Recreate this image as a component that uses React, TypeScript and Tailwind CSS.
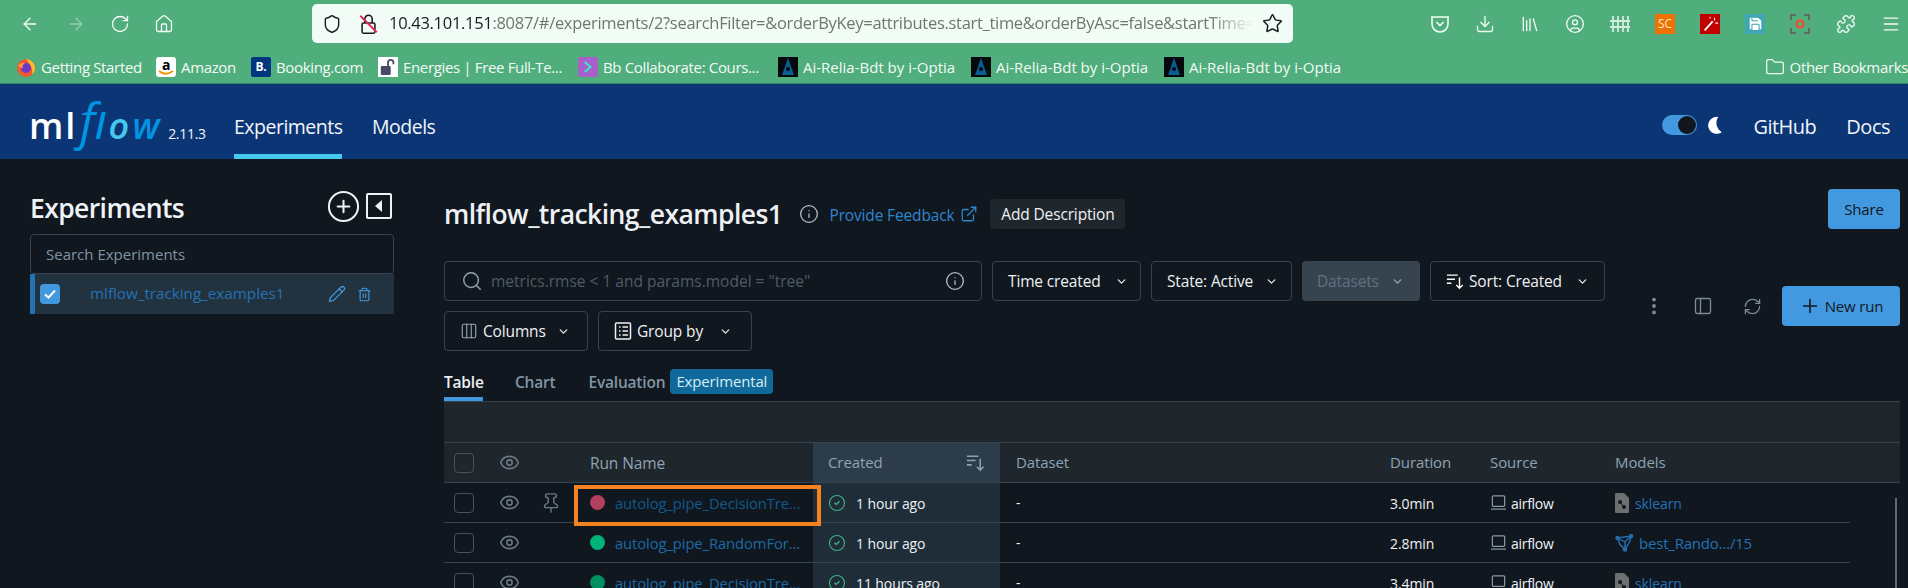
import React from 'react';
import {
  ArrowLeft, ArrowRight, RotateCw, Home, Shield, Star, Download, Library, CircleUser, Puzzle, Menu, Folder,
  Plus, CirclePlus, Pencil, Trash2, Info, ExternalLink, Search, ChevronDown, Columns3, MoreVertical,
  PanelLeft, RefreshCw, Eye, Pin, CircleCheck, Save,
} from 'lucide-react';

const ui = "font-['Open_Sans',sans-serif]";

const SortIcon = ({ className }: { className?: string }) => (
  <svg viewBox="0 0 20 20" className={className} fill="none" stroke="currentColor" strokeWidth="1.6">
    <path d="M1 3.500h12M1 8h9M1 12.500h5M15 6v12M11.500 14.500 15 18l3.500-3.500" />
  </svg>
);

const SlashLock = () => (
  <svg viewBox="0 0 20 24" className="w-[19px] h-[22px]" fill="none" strokeWidth="1.7">
    <rect x="3" y="11" width="14" height="11" rx="1.500" stroke="#1b1b1b" />
    <path d="M6 11V6.500a4 4 0 0 1 8 0V11" stroke="#1b1b1b" />
    <path d="M1 3l18 18" stroke="#e0245e" strokeWidth="2" />
  </svg>
);

const FirefoxIcon = () => (
  <svg viewBox="0 0 20 20" className="w-[20px] h-[20px]">
    <circle cx="10" cy="11" r="9" fill="#f2592b" />
    <path d="M10 2c6 1 9 5 9 9 0 3-1 5-3 6 1-5-1-9-6-15z" fill="#ffbd2e" />
    <circle cx="10" cy="11" r="5" fill="#6e39c5" />
    <path d="M2 9c2-3 5-4 7-3-2 1-3 3-2 5-2 0-4-1-5-2z" fill="#ff9640" />
  </svg>
);

const AiIcon = () => (
  <svg viewBox="0 0 20 20" className="w-[20px] h-[20px] bg-[#05080c] shrink-0">
    <path d="M10 1 16 18H4z" fill="#0a5d8f" />
    <circle cx="10" cy="12" r="2" fill="#05080c" />
  </svg>
);

const bookmarks = [
  { icon: <FirefoxIcon />, label: 'Getting Started', box: 'w-[140px]' },
  {
    icon: (
      <span className="relative w-[20px] h-[20px] rounded-[3px] bg-white flex justify-center text-[14px] font-bold leading-[15px] text-black">
        a
        <svg viewBox="0 0 16 6" className="absolute left-[2px] bottom-[1px] w-[16px] h-[6px]"><path d="M1 1c4 3.500 9 3.500 14 0" fill="none" stroke="#f79400" strokeWidth="1.800" /></svg>
      </span>
    ),
    label: 'Amazon', box: 'w-[95px]',
  },
  {
    icon: <span className="w-[20px] h-[20px] rounded-[2px] bg-[#003580] flex items-center justify-center text-[12px] font-bold leading-none text-white">B.</span>,
    label: 'Booking.com', box: 'w-[127px]',
  },
  {
    icon: <span className="w-[20px] h-[20px] bg-white flex items-center justify-center text-[#4a4a68]"><svg viewBox="0 0 20 20" className="w-[18px] h-[18px]"><rect x="2" y="9" width="11" height="10" rx="1.500" fill="currentColor" /><path d="M10 9V5a3 3 0 0 1 6 0v2" fill="none" stroke="currentColor" strokeWidth="2" /></svg></span>,
    label: 'Energies | Free Full-Te...', box: 'w-[200px]',
  },
  {
    icon: <span className="w-[20px] h-[20px] rounded-[2px] bg-[#a85fc9] flex items-center justify-center"><svg viewBox="0 0 12 14" className="w-[10px] h-[14px]"><path d="M2 1l7 6-7 6" fill="none" stroke="#3fe0d0" strokeWidth="2.500" /></svg></span>,
    label: 'Bb Collaborate: Cours...', box: 'w-[200px]',
  },
  { icon: <AiIcon />, label: 'Ai-Relia-Bdt by i-Optia', box: 'w-[193px] tracking-[0px]' },
  { icon: <AiIcon />, label: 'Ai-Relia-Bdt by i-Optia', box: 'w-[193px] tracking-[0px]' },
  { icon: <AiIcon />, label: 'Ai-Relia-Bdt by i-Optia', box: 'w-[193px] tracking-[0px]' },
];

const BrowserChrome = () => (
  <div className={`h-[84px] bg-[#50ad7c] border-b border-b-[#2f8a5b] text-[#f3fbf6] ${ui}`}>
    <div className="h-[47px] pt-[4px] flex items-start">
      <div className="flex items-center h-[39px] pl-[20px] w-[312px]">
        <ArrowLeft className="w-[20px] h-[20px]" strokeWidth={1.6} />
        <ArrowRight className="w-[20px] h-[20px] ml-[26px] opacity-40" strokeWidth={1.6} />
        <RotateCw className="w-[20px] h-[20px] ml-[24px]" strokeWidth={1.6} />
        <Home className="w-[20px] h-[20px] ml-[24px]" strokeWidth={1.6} />
      </div>
      <div className="w-[981px] h-[39px] bg-[#f2fcf6] rounded-[5px] flex items-center pl-[10px] text-[#1b1b1b]">
        <Shield className="w-[20px] h-[22px] text-[#1b1b1b]" strokeWidth={1.7} />
        <span className="ml-[17px]"><SlashLock /></span>
        <div className="ml-[11px] w-[864px] overflow-hidden whitespace-nowrap text-[16.5px] tracking-[-0.3px] [mask-image:linear-gradient(to_right,black_95%,transparent)]">
          10.43.101.151<span className="text-[#6f7671]">:8087/#/experiments/2?searchFilter=&amp;orderByKey=attributes.start_time&amp;orderByAsc=false&amp;startTime=ALL</span>
        </div>
        <Star className="w-[21px] h-[21px] ml-[9px] text-[#1b1b1b]" strokeWidth={1.7} />
      </div>
      <div className="flex items-center h-[39px] pl-[137px] gap-[25px]">
        <svg viewBox="0 0 20 20" className="w-[20px] h-[20px]" fill="none" stroke="currentColor" strokeWidth="1.6"><path d="M2 3h16v7a8 8 0 0 1-16 0z" /><path d="M6.500 8 10 11.500 13.500 8" /></svg>
        <Download className="w-[20px] h-[20px]" strokeWidth={1.6} />
        <Library className="w-[20px] h-[20px]" strokeWidth={1.6} />
        <CircleUser className="w-[20px] h-[20px]" strokeWidth={1.6} />
        <svg viewBox="0 0 20 20" className="w-[20px] h-[20px] opacity-80" fill="none" stroke="currentColor" strokeWidth="1.800"><path d="M3 2v16M8 2v16M13 2v16M18 2v16M0 7h20M0 13h20" /></svg>
        <span className="w-[20px] h-[20px] bg-[#ef7100] text-[12px] leading-[20px] text-center text-[#fbe7d0]">SC</span>
        <span className="w-[20px] h-[20px] bg-[#c20000] flex items-center justify-center"><svg viewBox="0 0 20 20" className="w-[18px] h-[18px]" stroke="#fff" strokeWidth="2"><path d="M4 17 13 7" /><path d="M15 3v3M16 9h3M10 2v2" strokeWidth="1.200" /></svg></span>
        <span className="w-[20px] h-[20px] bg-[#3fa7b5] flex items-center justify-center text-white"><Save className="w-[17px] h-[17px]" fill="#fff" stroke="#3fa7b5" strokeWidth={1.500} /></span>
        <svg viewBox="0 0 20 20" className="w-[20px] h-[20px]" fill="none" stroke="#5f6b66" strokeWidth="2"><path d="M1 6V1h5M14 1h5v5M19 14v5h-5M6 19H1v-5" /><circle cx="10" cy="10" r="3.500" stroke="#e8543a" strokeWidth="2.500" /></svg>
        <Puzzle className="w-[20px] h-[20px] ml-[1px]" strokeWidth={1.6} />
        <Menu className="w-[20px] h-[20px]" strokeWidth={1.6} />
      </div>
    </div>
    <div className="h-[36px] pl-[16px] pt-[4px] flex items-center text-[15px] tracking-[-0.35px] whitespace-nowrap overflow-hidden">
      {bookmarks.map((b, i) => (
        <div key={i} className={`${b.box} shrink-0 flex items-center gap-[5px]`}>
          {b.icon}
          <span>{b.label}</span>
        </div>
      ))}
      <div className="ml-auto shrink-0 flex items-center gap-[5px]">
        <Folder className="w-[20px] h-[20px]" strokeWidth={1.500} />
        <span>Other Bookmarks</span>
      </div>
    </div>
  </div>
);

const Logo = () => (
  <div className="w-[205px] h-[50px] flex items-baseline whitespace-nowrap leading-none mb-[4px]">
    <span className="text-[36px] font-semibold text-white tracking-[2px]">ml</span>
    <span className="ml-[2px] text-[50px] italic text-[#0194e2]">f</span>
    <span className="text-[36px] italic font-semibold text-[#0194e2] tracking-[3.500px]">l<span className="text-[#43c9ed]">o</span>w</span>
    <span className="ml-[5px] text-[14px] tracking-[-0.3px]">2.11.3</span>
  </div>
);

const AppHeader = () => (
  <div className={`h-[75px] bg-[#0b3574] flex items-center pl-[29px] text-[#f1f6fa] ${ui}`}>
    <Logo />
    <div className="h-full w-[138px] flex flex-col items-start">
      <div className="h-[70px] w-[108px] pt-[16px] flex items-center text-[19.5px] tracking-[-0.5px]">Experiments</div>
      <div className="h-[5px] w-[108px] bg-[#43c9ed]" />
    </div>
    <div className="text-[19.5px] tracking-[-0.5px] mt-[11px]">Models</div>
    <div className="ml-auto pr-[18px] flex items-center mt-[11px] text-[20px] tracking-[-0.5px]">
      <div className="w-[35px] h-[20px] rounded-full bg-[#4299e0] flex justify-end items-center pr-[1px] mb-[4px]">
        <div className="w-[18px] h-[18px] rounded-full bg-[#11171c]" />
      </div>
      <svg viewBox="0 0 16 20" className="w-[15px] h-[18px] ml-[11px] mb-[4px] text-white" fill="currentColor"><path d="M11 1A9.500 9.500 0 1 0 15 18 A12 12 0 0 1 11 1z" /></svg>
      <span className="ml-[30px]">GitHub</span>
      <span className="ml-[30px]">Docs</span>
    </div>
  </div>
);

const Sidebar = () => (
  <div className="w-[444px] shrink-0 pl-[30px] pr-[50px] pt-[29px]">
    <div className="flex items-center h-[46px] pb-[4px]">
      <h1 className="text-[26.5px] font-semibold text-[#eff3f6] tracking-[-0.6px]">Experiments</h1>
      <CirclePlus className="ml-auto mb-[6px] w-[35px] h-[35px] text-[#eef1f4]" strokeWidth={1.400} />
      <svg viewBox="0 0 26 26" className="ml-[5px] mr-[2px] mb-[6px] w-[26px] h-[26px]"><rect x="1" y="1" width="24" height="24" rx="1" fill="none" stroke="#eef1f4" strokeWidth="2" /><path d="M16 7v12L9 13z" fill="#eef1f4" /></svg>
    </div>
    <div className="h-[40px] border border-[#37444f] rounded-[4px] pl-[15px] pt-[1px] flex items-center text-[15px] text-[#8194a5]">Search Experiments</div>
    <div className="h-[40px] bg-[#23323f] border-l-[5px] border-l-[#2272b4] flex items-center pl-[5px]">
      <span className="w-[20px] h-[20px] rounded-[4px] bg-[#4299e0] flex items-center justify-center">
        <svg viewBox="0 0 14 14" className="w-[14px] h-[14px]" fill="none" stroke="#fff" strokeWidth="2"><path d="m2 7.500 3.500 3L12 3.500" /></svg>
      </span>
      <span className="ml-[30px] mb-[1px] w-[238px] text-[15.3px] tracking-[-0.05px] text-[#2272b4] whitespace-nowrap">mlflow_tracking_examples1</span>
      <Pencil className="w-[18px] h-[18px] text-[#4299e0]" strokeWidth={1.700} />
      <Trash2 className="ml-[11px] w-[15px] h-[15px] text-[#4299e0]" strokeWidth={1.800} />
    </div>
  </div>
);

const FilterButton = ({ box, icon, label, muted }: { box: string; icon?: React.ReactNode; label: string; muted?: boolean }) => (
  <div className={`${box} h-[40px] rounded-[4px] flex items-center justify-between pl-[15px] text-[15.5px] tracking-[-0.15px] ${muted ? 'bg-[#37444f] text-[#5f7182]' : 'border border-[#37444f] text-[#eef1f4]'}`}>
    <span className="flex items-center gap-[5px] whitespace-nowrap">{icon}<span className="pt-[2px]">{label}</span></span>
    <ChevronDown className={`w-[13px] h-[13px] ${muted ? 'text-[#92a4b3]' : 'text-[#dfe5ea]'}`} strokeWidth={2.500} />
  </div>
);

const Toolbar = () => (
  <div className="mt-[32px] flex items-start">
    <div className="w-[1208px]">
      <div className="flex gap-[10px]">
        <div className="w-[538px] h-[40px] border border-[#37444f] rounded-[4px] flex items-center pl-[16px] pr-[16px] text-[15.5px] text-[#4f5c66]">
          <Search className="w-[22px] h-[22px] text-[#92a4b3]" strokeWidth={1.600} />
          <span className="ml-[8px] pt-[2px] whitespace-nowrap">metrics.rmse &lt; 1 and params.model = "tree"</span>
          <Info className="ml-auto w-[20px] h-[20px] text-[#aebbc6]" strokeWidth={1.600} />
        </div>
        <FilterButton box="w-[149px] pr-[12px]" label="Time created" />
        <FilterButton box="w-[141px] pr-[13px]" label="State: Active" />
        <FilterButton box="w-[118px] pr-[16px]" label="Datasets" muted />
        <FilterButton box="w-[175px] pr-[15px]" label="Sort: Created" icon={<SortIcon className="w-[18px] h-[18px] text-white" />} />
      </div>
      <div className="mt-[10px] flex gap-[10px]">
        <FilterButton box="w-[144px] pr-[17px]" label="Columns" icon={<Columns3 className="w-[18px] h-[18px] text-[#92a4b3]" strokeWidth={1.500} />} />
        <FilterButton box="w-[154px] pr-[19px]" label="Group by" icon={<svg viewBox="0 0 18 18" className="w-[18px] h-[18px]" fill="none" stroke="#eef1f4" strokeWidth="1.500"><rect x="1.500" y="1" width="15" height="16" rx="1" /><path d="M5 5h1.500M8.500 5H14M5 9h1.500M8.500 9H14M5 13h1.500M8.500 13H14" /></svg>} />
      </div>
    </div>
    <div className="flex-1 mt-[25px] flex items-center h-[40px] text-[#7b8a97]">
      <MoreVertical className="ml-[-9px] w-[22px] h-[22px]" strokeWidth={2.200} />
      <PanelLeft className="ml-[28px] w-[20px] h-[20px]" strokeWidth={1.600} />
      <RefreshCw className="ml-[30px] w-[19px] h-[19px]" strokeWidth={1.600} />
      <div className="ml-auto w-[118px] h-[40px] rounded-[4px] bg-[#4299e0] flex items-center justify-center gap-[4px] text-[15px] tracking-[-0.15px] text-[#11171c]">
        <Plus className="w-[22px] h-[22px]" strokeWidth={1.700} />New run
      </div>
    </div>
  </div>
);

const Tabs = () => (
  <div className="mt-[18px] h-[33px] flex items-start text-[15.5px] font-semibold text-[#8195a5] border-b border-b-[#37444f]">
    <div className="w-[39px] h-[32px] border-b-[4px] border-b-[#4299e0] text-[#eef1f4] pt-[2px] tracking-[-0.2px]">Table</div>
    <div className="ml-[32px] pt-[2px] tracking-[-0.2px]">Chart</div>
    <div className="ml-[33px] pt-[2px] tracking-[-0.2px]">Evaluation</div>
    <div className="ml-[5px] w-[103px] h-[25px] rounded-[4px] bg-[#10699a] text-[#d8edf8] font-normal text-center text-[15px] leading-[25px] tracking-[-0.15px] whitespace-nowrap">Experimental</div>
  </div>
);

const Checkbox = () => <span className="w-[20px] h-[20px] rounded-[4px] border border-[#445461]" />;

const LaptopIcon = () => (
  <svg viewBox="0 0 18 18" className="w-[17px] h-[17px]" fill="none" stroke="#8a99a5" strokeWidth="1.300"><rect x="2.500" y="2" width="13" height="11" rx="1" /><path d="M1 16h16" /></svg>
);

const SklearnIcon = () => (
  <svg viewBox="0 0 14 20" className="w-[14px] h-[20px]"><path d="M1 0h8l5 5v14a1 1 0 0 1-1 1H1a1 1 0 0 1-1-1V1a1 1 0 0 1 1-1z" fill="#6f6f6f" /><circle cx="5" cy="9" r="2" fill="#15191d" /><circle cx="9" cy="14" r="2" fill="#15191d" /><path d="m5 9 4 5" stroke="#15191d" /></svg>
);

const ModelIcon = () => (
  <svg viewBox="0 0 18 18" className="w-[18px] h-[18px]" fill="none" stroke="#2272b4" strokeWidth="1.400"><path d="M2.500 4 16 2l-1 5-5 8.500-5-5z" /><path d="M2.500 4 10 8l6-6M10 8v7.500" /><circle cx="2.500" cy="4" r="1.500" /><circle cx="16" cy="2" r="1.500" /><circle cx="10" cy="15.500" r="1.500" /></svg>
);

const runs = [
  { dot: 'bg-[#b0405b]', name: 'autolog_pipe_DecisionTre...', link: 'text-[#0f5a8c]', created: '1 hour ago', duration: '3.0min', pin: true, model: 'sklearn', modelIcon: <SklearnIcon />, modelText: 'text-[14px]' },
  { dot: 'bg-[#00b379]', name: 'autolog_pipe_RandomFor...', link: 'text-[#1b6aa6]', created: '1 hour ago', duration: '2.8min', pin: false, model: 'best_Rando.../15', modelIcon: <ModelIcon />, modelText: 'text-[15px] tracking-[-0.2px]' },
  { dot: 'bg-[#008f5f]', name: 'autolog_pipe_DecisionTre...', link: 'text-[#1b6aa6]', created: '11 hours ago', duration: '3.4min', pin: false, model: 'sklearn', modelIcon: <SklearnIcon />, modelText: 'text-[14px]' },
];

const RunTable = () => (
  <div className="text-[14px] tracking-[-0.1px]">
    <div className="h-[41px] bg-[#1f272d] border-b border-b-[#37444f]" />
    <div className="h-[40px] bg-[#1f272d] border-b border-b-[#37444f] flex items-center text-[#8fa2b3] text-[15px]">
      <div className="w-[40px] pl-[10px] flex"><Checkbox /></div>
      <div className="w-[50px] flex justify-center"><Eye className="w-[21px] h-[21px] text-[#6b7a86]" strokeWidth={1.800} /></div>
      <div className="w-[40px]" />
      <div className="w-[239px] pl-[16px] pt-[2px] text-[15.5px]">Run Name</div>
      <div className="w-[187px] h-[39px] px-[15px] bg-[#2d3c4a] flex items-center justify-between">
        Created
        <SortIcon className="w-[19px] h-[19px]" />
      </div>
      <div className="w-[374px] pl-[16px]">Dataset</div>
      <div className="w-[100px] pl-[16px]">Duration</div>
      <div className="w-[125px] pl-[16px]">Source</div>
      <div className="pl-[16px]">Models</div>
    </div>
    <div className="flex items-start">
      <div className="w-[1406px] shrink-0">
        {runs.map((r, i) => (
          <div key={i} className="h-[40px] border-b border-b-[#37444f] flex items-center text-[#eef1f4]">
            <div className="w-[40px] pl-[10px] flex"><Checkbox /></div>
            <div className="w-[50px] flex justify-center"><Eye className="w-[21px] h-[21px] text-[#6b7a86]" strokeWidth={1.800} /></div>
            <div className="w-[40px] flex justify-start pl-[6px]">
              {r.pin && <Pin className="w-[22px] h-[24px] text-[#6b7a86]" strokeWidth={1.500} />}
            </div>
            <div className="w-[239px] pl-[16px] flex items-center">
              <span className={`w-[15px] h-[15px] rounded-full ${r.dot}`} />
              <span className={`ml-[10px] pt-[1px] text-[14.8px] tracking-[-0.1px] whitespace-nowrap ${r.link}`}>{r.name}</span>
            </div>
            <div className="w-[187px] h-[39px] px-[15px] bg-[#1f2d38] flex items-center">
              <CircleCheck className="w-[18px] h-[18px] text-[#3fb27f]" strokeWidth={1.500} />
              <span className="ml-[10px] pt-[1px]">{r.created}</span>
            </div>
            <div className="w-[374px] pl-[16px]">-</div>
            <div className="w-[100px] pl-[16px] pt-[1px]">{r.duration}</div>
            <div className="w-[125px] pl-[16px] flex items-center gap-[4px] text-[14px] tracking-[-0.3px]"><LaptopIcon /><span className="pt-[1px]">airflow</span></div>
            <div className={`pl-[16px] flex items-center gap-[6px] whitespace-nowrap text-[#2272b4] ${r.modelText}`}>
              {r.modelIcon}
              <span className="pt-[1px]">{r.model}</span>
            </div>
          </div>
        ))}
      </div>
      <div className="ml-[45px] mt-[15px] w-[2px] h-[120px] bg-[#5d6a74]" />
    </div>
  </div>
);

export default function App() {
  return (
    <div className={`relative w-[1908px] h-[588px] overflow-hidden bg-[#11171f] ${ui}`}>
      <BrowserChrome />
      <AppHeader />
      <div className="flex">
        <Sidebar />
        <div className="w-[1456px] pt-[30px]">
          <div className="h-[40px] flex items-start text-[#eef1f4]">
            <div className="h-[40px] pt-[10px] flex items-center">
              <h2 className="mt-[2px] text-[26.5px] font-semibold tracking-[-0.55px] whitespace-nowrap">mlflow_tracking_examples1</h2>
              <Info className="ml-[17px] w-[20px] h-[20px] text-[#aebbc6]" strokeWidth={1.600} />
              <span className="ml-[10px] pt-[3px] text-[#2f86cf] text-[15.5px] tracking-[-0.15px]">Provide Feedback</span>
              <ExternalLink className="ml-[6px] w-[18px] h-[18px] text-[#2f86cf]" strokeWidth={1.700} />
              <div className="ml-[12px] pt-[2px] w-[135px] h-[30px] rounded-[4px] bg-[#1f272d] flex items-center justify-center text-[15.5px] tracking-[-0.15px]">Add Description</div>
            </div>
            <div className="ml-auto w-[72px] h-[40px] rounded-[4px] bg-[#4299e0] flex items-center justify-center text-[15px] tracking-[-0.15px] text-[#11171c]">Share</div>
          </div>
          <Toolbar />
          <Tabs />
          <RunTable />
        </div>
      </div>
      {/* annotation drawn over the screenshot */}
      <div className="absolute left-[574px] top-[485px] w-[247px] h-[41px] border-[4px] border-[#f58220]" />
    </div>
  );
}
